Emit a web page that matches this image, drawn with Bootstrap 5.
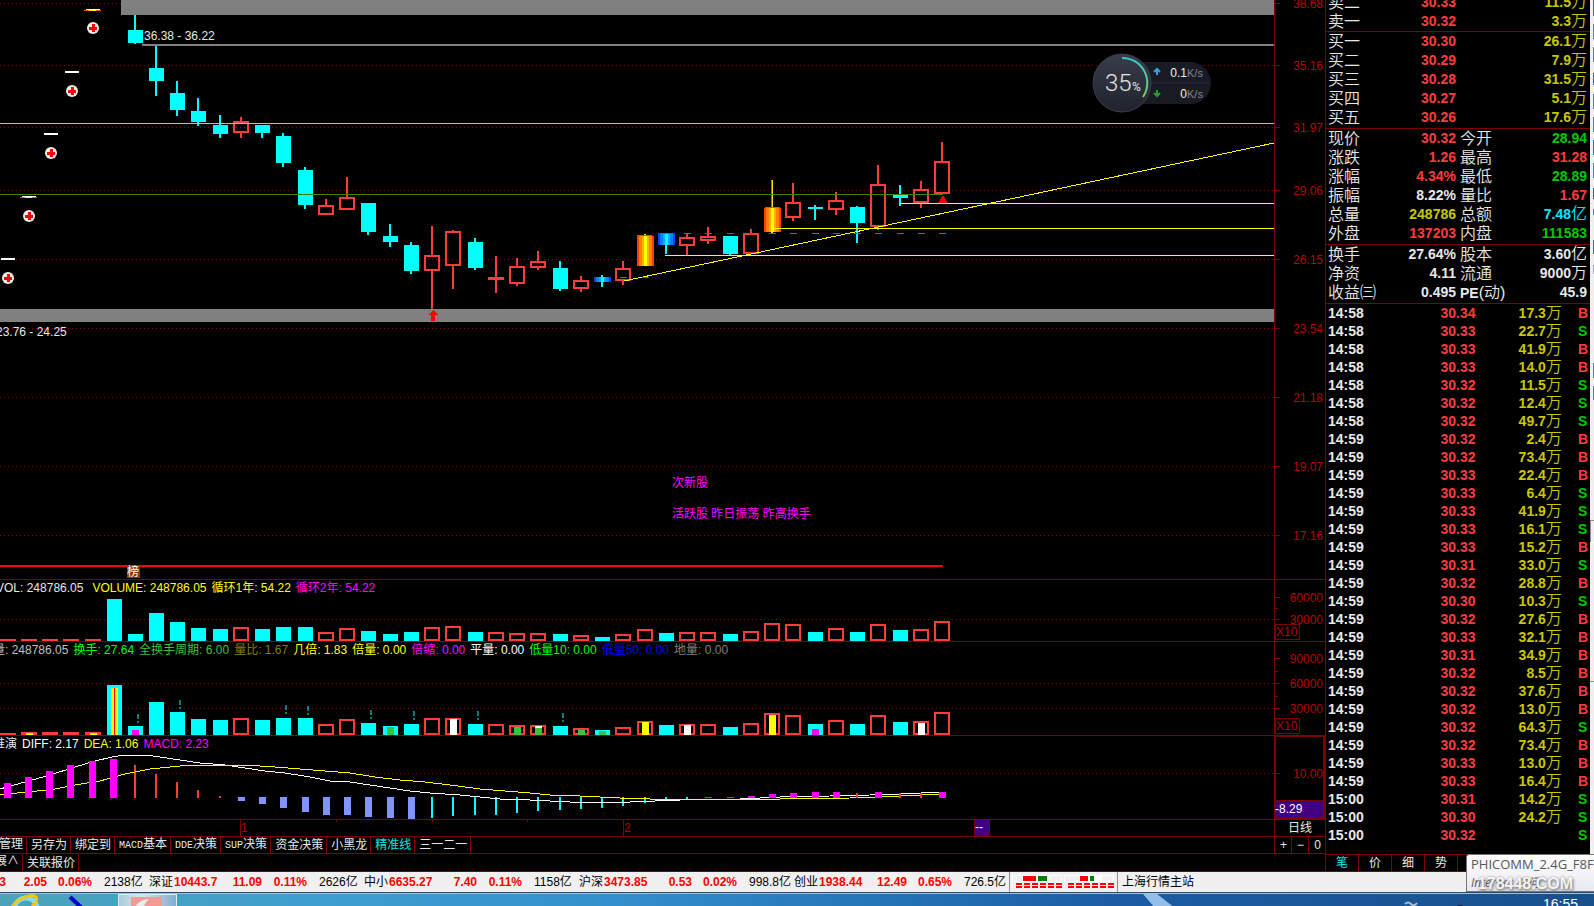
<!DOCTYPE html>
<html lang="zh-CN">
<head>
<meta charset="utf-8">
<meta name="viewport" content="width=device-width, initial-scale=1">
<title>行情 - 日线</title>
<link href="https://cdn.jsdelivr.net/npm/bootstrap@5.3.0/dist/css/bootstrap.min.css" rel="stylesheet">
<style>
  :root { --line:#800000; --axis:#b80000; --up:#ff3c3c; --down:#00ffff; --quote:#c8c800; --gain:#00c800; }
  body { background:#000; color:#e8e8e8; font:12px/16px "Liberation Sans","Noto Sans CJK SC",sans-serif; }
  svg { display:block; shape-rendering:crispEdges; }
  svg text { font-size:12px; }
  button { background:none; border:0; padding:0; color:inherit; line-height:16px; white-space:nowrap; }
  .fs-14 { font-size:14px; }

  /* chart column */
  .pane { border-bottom:1px solid var(--line); }
  .plot { min-width:0; overflow:hidden; }
  .plot svg { width:100%; }
  .scale { width:51px; border-left:1px solid var(--line); flex:none; }
  .legend-line { white-space:nowrap; height:18px; line-height:17px; gap:5px; }
  .shift-sm { margin-left:-4px; } .shift-lg { margin-left:-7px; }
  .h-price { height:579px; } .h-vol { height:43px; } .h-turn { height:75px; } .h-macd { height:65px; }
  .c-yel { color:#ff0; } .c-mag { color:#f0f; } .c-lime { color:#0f0; } .c-grn { color:#40c040; }
  .c-olive { color:#808000; } .c-blue { color:#00f; } .c-gray { color:#808080; } .c-lgray { color:#c0c0c0; }

  .strip { border-bottom:1px solid var(--line); height:17px; }
  .strip-last { height:18px; }
  .strip button { border-right:1px solid var(--line); padding:0 3px 0 4px; flex:none; line-height:14px; }
  .strip .latin { font-family:"Liberation Mono",monospace; font-size:10px; }
  .strip .first-tab { width:27px; overflow:hidden; display:flex; justify-content:flex-end; }
  .strip .first-tab.narrow { width:23px; }
  .strip .scale button { flex:1; }
  .scale button:last-child { border-right:0; }
  .is-on { color:#00e8e8; }

  /* quote column */
  .quotes { width:265px; border-left:1px solid var(--line); flex:none; font-size:14px; }
  .quotes table { width:100%; table-layout:fixed; border-collapse:collapse; }
  .quotes td, .quotes th { padding:0; height:19px; line-height:19px; white-space:nowrap; font-weight:bold; }
  .quotes th, .quotes .cjk { font-weight:350; font-size:16px; }
  .quotes .cjk, .quotes th b { line-height:0; }
  .quotes .block { border-bottom:1px solid var(--line); padding:0 3px 1px 2px; }
  .quotes .sell { height:32px; padding-bottom:0; overflow:hidden; }
  .quotes .ticks { width:auto; margin-left:2px; }
  .quotes .ticks td { height:18px; line-height:18px; }
  .t-time { width:60px; } .t-price { width:87px; } .t-vol { width:86px; } .t-side { width:28px; }
  .c-up { color:var(--up); } .c-down { color:var(--gain); } .c-vol { color:var(--quote); } .c-amt { color:#00e8ff; }
  .w-name { width:46px; } .w-price { width:82px; }
  .views { border-top:1px solid var(--line); border-bottom:1px solid var(--line); height:18px; font-size:12px; }
  .views button { width:33px; border-right:1px solid var(--line); }
  .edge { width:4px; flex:none; background:#f0f0f0; }

  /* status bar and taskbar */
  .status { height:22px; background:#f0f0f0; color:#000; border-bottom:1px solid #2a4a6c; line-height:20px; white-space:nowrap; }
  .index-item { display:grid; grid-template-columns:25px 47px 41px 45px 57px; flex:none; }
  .index-item b { color:#f00; }
  .index-item span:last-child { padding-left:12px; }
  .index-item.cut { margin-left:-66px; }
  .cell-sep { border-left:1px solid #909090; }
  .taskbar { height:13px; overflow:hidden; border-top:1px solid #9cc4e4;
    background:linear-gradient(90deg,#4aa4b8 0,#3f9ed0 20%,#3490cc 38%,#2474b8 55%,#1c5ca4 70%,#18508c 100%); }
  .task-app { width:59px; height:20px; border:1px solid #dcecf4; background:linear-gradient(90deg,#a8ccdc,#d8e4ea 40%,#7cb0d0); margin-left:32px; }
  .clock { padding:2px 16px 0 0; }

  /* floating items */
  .net-meter { left:1092px; top:53px; width:122px; height:60px; }
  .net-meter svg, .taskbar svg { shape-rendering:auto; }
  .wifi-tip { right:0; bottom:14px; width:128px; height:38px; overflow:hidden; color:#575757; white-space:nowrap;
    background:linear-gradient(#fff,#e8e8f2); border:1px solid #767676; border-right:0; border-radius:3px 0 0 0; padding-left:4px;
    font:13px/18px "Open Sans","Noto Sans CJK SC",sans-serif; }
  .wifi-tip em { font-size:12px; line-height:16px; }
  .stamp { right:21px; bottom:12px; font:bold 16px/20px "Liberation Sans",sans-serif; color:#f4f4f4;
    text-shadow:0 0 2px #888,1px 2px 3px #777; }
</style>
</head>
<body class="overflow-hidden">
<div class="d-flex flex-column vh-100 position-relative overflow-hidden">
  <main class="d-flex">
    <section class="flex-grow-1 d-flex flex-column plot">
      <div class="pane d-flex">
        <div class="plot flex-grow-1"><svg id="price" class="h-price"></svg></div>
        <div class="scale"><svg id="priceScale" class="h-price" width="50"></svg></div>
      </div>

      <div class="pane d-flex">
        <div class="plot flex-grow-1">
          <div class="legend-line shift-sm d-flex"><span>VOL: 248786.05</span><span class="c-yel ps-1">VOLUME: 248786.05</span><span class="c-yel">循环1年: 54.22</span><span class="c-mag">循环2年: 54.22</span></div>
          <svg id="vol" class="h-vol"></svg>
        </div>
        <div class="scale"><svg id="volScale" height="61" width="50"></svg></div>
      </div>

      <div class="pane d-flex">
        <div class="plot flex-grow-1">
          <div class="legend-line shift-lg d-flex"><span class="c-lgray">量: 248786.05</span><span class="c-lime">换手: 27.64</span><span class="c-grn">全换手周期: 6.00</span><span class="c-olive">量比: 1.67</span><span class="c-yel">几倍: 1.83</span><span class="c-yel">倍量: 0.00</span><span class="c-mag">倍缩: 0.00</span><span class="text-white">平量: 0.00</span><span class="c-lime">低量10: 0.00</span><span class="c-blue">低量50: 0.00</span><span class="c-gray">地量: 0.00</span></div>
          <svg id="turn" class="h-turn"></svg>
        </div>
        <div class="scale"><svg id="turnScale" height="93" width="50"></svg></div>
      </div>

      <div class="pane d-flex">
        <div class="plot flex-grow-1">
          <div class="legend-line shift-lg d-flex"><span>推演</span><span class="text-white">DIFF: 2.17</span><span class="c-yel">DEA: 1.06</span><span class="c-mag">MACD: 2.23</span></div>
          <svg id="macd" class="h-macd"></svg>
        </div>
        <div class="scale"><svg id="macdScale" height="83" width="50"></svg></div>
      </div>

      <div class="strip d-flex">
        <div class="plot flex-grow-1"><svg id="months" height="16"></svg></div>
        <div class="scale text-center">日线</div>
      </div>
      <div class="strip d-flex">
        <nav class="plot flex-grow-1 d-flex">
          <button class="first-tab">管理</button><button>另存为</button><button>绑定到</button><button><span class="latin">MACD</span>基本</button><button><span class="latin">DDE</span>决策</button><button><span class="latin">SUP</span>决策</button><button>资金决策</button><button>小黑龙</button><button class="is-on">精准线</button><button>三一二一</button>
        </nav>
        <div class="scale d-flex"><button>+</button><button>−</button><button>0</button></div>
      </div>
      <div class="strip strip-last d-flex"><button class="first-tab narrow">展∧</button><button>关联报价</button></div>
    </section>

    <aside class="quotes d-flex flex-column">
      <div class="block sell d-flex align-items-end">
        <table>
          <colgroup><col class="w-name"><col class="w-price"><col></colgroup>
          <tr><th>卖二</th><td class="text-end c-up">30.33</td><td class="text-end c-vol">11.5<span class="cjk">万</span></td></tr>
          <tr><th>卖一</th><td class="text-end c-up">30.32</td><td class="text-end c-vol">3.3<span class="cjk">万</span></td></tr>
        </table>
      </div>
      <div class="block">
        <table>
          <colgroup><col class="w-name"><col class="w-price"><col></colgroup>
          <tr><th>买一</th><td class="text-end c-up">30.30</td><td class="text-end c-vol">26.1<span class="cjk">万</span></td></tr>
          <tr><th>买二</th><td class="text-end c-up">30.29</td><td class="text-end c-vol">7.9<span class="cjk">万</span></td></tr>
          <tr><th>买三</th><td class="text-end c-up">30.28</td><td class="text-end c-vol">31.5<span class="cjk">万</span></td></tr>
          <tr><th>买四</th><td class="text-end c-up">30.27</td><td class="text-end c-vol">5.1<span class="cjk">万</span></td></tr>
          <tr><th>买五</th><td class="text-end c-up">30.26</td><td class="text-end c-vol">17.6<span class="cjk">万</span></td></tr>
        </table>
      </div>
      <div class="block">
        <table>
          <colgroup><col class="w-name"><col class="w-price"><col><col></colgroup>
          <tr><th>现价</th><td class="text-end c-up">30.32</td><th class="ps-1">今开</th><td class="text-end c-down">28.94</td></tr>
          <tr><th>涨跌</th><td class="text-end c-up">1.26</td><th class="ps-1">最高</th><td class="text-end c-up">31.28</td></tr>
          <tr><th>涨幅</th><td class="text-end c-up">4.34%</td><th class="ps-1">最低</th><td class="text-end c-down">28.89</td></tr>
          <tr><th>振幅</th><td class="text-end">8.22%</td><th class="ps-1">量比</th><td class="text-end c-up">1.67</td></tr>
          <tr><th>总量</th><td class="text-end c-vol">248786</td><th class="ps-1">总额</th><td class="text-end c-amt">7.48<span class="cjk">亿</span></td></tr>
          <tr><th>外盘</th><td class="text-end c-up">137203</td><th class="ps-1">内盘</th><td class="text-end c-down">111583</td></tr>
        </table>
      </div>
      <div class="block">
        <table>
          <colgroup><col class="w-name"><col class="w-price"><col><col></colgroup>
          <tr><th>换手</th><td class="text-end">27.64%</td><th class="ps-1">股本</th><td class="text-end">3.60<span class="cjk">亿</span></td></tr>
          <tr><th>净资</th><td class="text-end">4.11</td><th class="ps-1">流通</th><td class="text-end">9000<span class="cjk">万</span></td></tr>
          <tr><th>收益㈢</th><td class="text-end">0.495</td><th class="ps-1"><b class="fs-14">PE</b>(动)</th><td class="text-end">45.9</td></tr>
        </table>
      </div>
      <table class="ticks"><colgroup><col class="t-time"><col class="t-price"><col class="t-vol"><col class="t-side"></colgroup><tbody id="ticks"></tbody></table>
      <div class="views d-flex mt-auto"><button class="is-on">笔</button><button>价</button><button>细</button><button>势</button></div>
    </aside>
    <div class="edge"><svg id="edge" width="4" height="871"></svg></div>
  </main>

  <footer class="status d-flex">
    <div class="index-item cut"><span></span><b class="text-end">3</b><b class="text-end">2.05</b><b class="text-end">0.06%</b><span>2138亿</span></div>
    <div class="index-item"><span>深证</span><b>10443.7</b><b class="text-end">11.09</b><b class="text-end">0.11%</b><span>2626亿</span></div>
    <div class="index-item"><span>中小</span><b>6635.27</b><b class="text-end">7.40</b><b class="text-end">0.11%</b><span>1158亿</span></div>
    <div class="index-item"><span>沪深</span><b>3473.85</b><b class="text-end">0.53</b><b class="text-end">0.02%</b><span>998.8亿</span></div>
    <div class="index-item"><span>创业</span><b>1938.44</b><b class="text-end">12.49</b><b class="text-end">0.65%</b><span>726.5亿</span></div>
    <div class="cell-sep"><svg id="lights" width="107" height="20"></svg></div>
    <div class="cell-sep ps-1">上海行情主站</div>
  </footer>

  <div class="taskbar d-flex flex-grow-1">
    <svg width="86" height="30">
      <ellipse cx="26" cy="14" rx="11" ry="10" fill="none" stroke="#7fdcf4" stroke-width="5"/>
      <path d="M12 13C18 4 32 -1 36 3c2 3-2 8-6 12" fill="none" stroke="#f5c518" stroke-width="3"/>
      <path d="M70 3l12 11" stroke="#0000c8" stroke-width="4"/>
    </svg>
    <div class="task-app"><svg width="57" height="20"><rect x="12" y="2" width="31" height="18" fill="#f49a94"/><path d="M14 20C15 9 21 5 30 4 24 9 24 14 27 20z" fill="#e8eef0"/></svg></div>
    <svg class="flex-grow-1" height="14">
      <path d="M966 0h14l18 14h-20z" fill="#a8d0f4" opacity=".85"/>
      <path d="M1228 10q3-3 6 0t6-1" fill="none" stroke="#b0bcc8" stroke-width="2"/>
      <circle cx="1283" cy="16" r="5" fill="#06101c"/>
    </svg>
    <time class="text-white fs-14 clock">16:55</time>
  </div>

  <div class="net-meter position-absolute">
    <svg width="122" height="60">
      <defs><linearGradient id="dial" x1="0" y1="0" x2="0" y2="1"><stop offset="0" stop-color="#383d4c"/><stop offset="1" stop-color="#20232c"/></linearGradient>
      <linearGradient id="arc" x1="0" y1="0" x2="0" y2="1"><stop offset="0" stop-color="#30c8c8"/><stop offset="1" stop-color="#80d060"/></linearGradient></defs>
      <rect x="22" y="9" width="97" height="42" rx="21" fill="#181b24"/>
      <path d="M58 30h60" stroke="#262a36"/>
      <circle cx="30" cy="30" r="29" fill="url(#dial)" stroke="#3c404c"/>
      <path d="M30 5A25 25 0 0 1 51 44" fill="none" stroke="url(#arc)" stroke-width="2"/>
      <text x="13" y="38" style="font:300 24px Roboto,sans-serif" fill="#e4e4e4">35</text>
      <text x="40" y="38" style="font:12px Roboto,sans-serif" fill="#e4e4e4">%</text>
      <path d="M65 22v-6M62 19l3-3 3 3" fill="none" stroke="#38a0e0" stroke-width="2"/>
      <path d="M65 37v6M62 40l3 3 3-3" fill="none" stroke="#20a030" stroke-width="2"/>
      <text x="95" y="24" text-anchor="end" fill="#f0f0f0">0.1</text><text x="95" y="24" style="font-size:11px" fill="#808490">K/s</text>
      <text x="95" y="45" text-anchor="end" fill="#f0f0f0">0</text><text x="95" y="45" style="font-size:11px" fill="#808490">K/s</text>
    </svg>
  </div>
  <div class="wifi-tip position-absolute">PHICOMM_2.4G_F8F8<br><em>Internet 访问</em></div>
  <div class="stamp position-absolute">178448.COM</div>
</div>

<script src="https://cdn.jsdelivr.net/npm/bootstrap@5.3.0/dist/js/bootstrap.bundle.min.js"></script>
<script>
const UP = '#ff3c3c', DOWN = '#00ffff', LINE = '#800000', AXIS = '#b80000';
const cx = i => Math.floor(135 + 21.25 * i);
const rect = (x, y, w, h, f) => `<rect x="${x}" y="${y}" width="${w}" height="${h}" fill="${f}"/>`;
const frame = (x, y, w, h) => `<rect x="${x + 1}" y="${y + 1}" width="${w - 2}" height="${Math.max(h - 2, 1)}" fill="none" stroke="${UP}" stroke-width="2"/>`;
const hline = (x, y, f, h = 1) => rect(x, y, '100%', h, f);
const grid = y => `<line x1="0" x2="100%" y1="${y + .5}" y2="${y + .5}" stroke="#900000" stroke-dasharray="1 3"/>`;
const label = (x, y, s, f, a = 'start') => `<text x="${x}" y="${y}" fill="${f}" text-anchor="${a}">${s}</text>`;
// every pane shares one vertical coordinate system; top is where the pane starts in it
const put = (id, top, s) => document.getElementById(id).innerHTML = `<g transform="translate(0 ${-top})">${s}</g>`;
const stripes = (x, y, h, cols) => { const n = cols.length; let s = ''; cols.forEach((c, k) => { const a = Math.round(k * 17 / n), b = Math.round((k + 1) * 17 / n); s += rect(x - 8 + a, y, b - a, h, c); }); return s; };
const FIRE = ['#ff3c00','#ff8000','#ffb000','#ffff00','#ffb000','#ff8000','#ff3c00'];
const ICE = ['#0040ff','#0080ff','#00b0ff','#00ffff','#00b0ff','#0080ff','#0040ff'];

// price pane: kind, high, body top, body bottom, low
const candles = [
 ['d',15,30,43,44],['d',46,68,81,96],['d',81,93,110,116],['d',98,111,122,126],['d',115,125,134,138],['u',117,121,133,138],
 ['d',125,125,133,138],['d',133,136,163,167],['d',167,170,205,209],['u',199,205,215,215],['u',177,197,210,210],['d',203,203,232,235],
 ['d',224,236,242,247],['d',242,245,271,274],['u',226,255,271,309],['u',230,231,266,289],['d',238,242,268,270],['u',256,277,280,293],
 ['u',258,266,284,286],['u',251,261,268,270],['d',261,268,289,291],['u',276,280,289,292],['ice',275,277,282,287],['u',261,268,281,285],
 ['fire',234,236,266,266],['ice',233,233,245,254],['u',234,237,246,255],['u',227,236,241,244],['d',236,236,254,255],['u',229,233,254,254],
 ['fire',180,208,232,233],['u',183,202,218,221],['d',205,207,209,220],['u',192,200,210,215],['d',206,207,223,243],['u',165,184,227,230],
 ['d',185,194,198,206],['u',181,189,203,208],['u',142,161,194,194]];
let s = [3,65,127,190,259,328,397,466,535].map(grid).join('');
s += hline(121, 0, '#808080', 15) + hline(142, 44, '#808080', 2) + hline(0, 309, '#808080', 13);
candles.forEach(([k, hi, a, b, lo], i) => {
  const x = cx(i);
  if (k === 'u') s += rect(x - 1, hi, 2, a - hi, UP) + rect(x - 1, b, 2, lo - b, UP) + frame(x - 8, a, 16, b - a);
  else if (k === 'd') s += rect(x - 1, hi, 2, lo - hi, DOWN) + rect(x - 7, a, 15, b - a, DOWN);
  else s += rect(x - 1, hi, 2, lo - hi, k === 'ice' ? DOWN : '#ffe000') + stripes(x, a, b - a, k === 'ice' ? ICE : FIRE);
});
s += rect(cx(30) - 1, 180, 1, 27, UP) + rect(637, 235, 15, 1, UP) + rect(765, 207, 15, 1, UP);
s += hline(0, 123, '#80ff00') + rect(0, 194, 943, 1, '#408000');
s += hline(899, 203, '#ff0') + hline(773, 228, '#ff0') + hline(665, 255, '#ff0');
s += '<path d="M624 281L2574 -133" stroke="#ff0" fill="none"/>';
for (let i = 23; i < 39; i++) s += rect(cx(i) - 3, i < 25 ? 277 : 233, 7, 1, '#0080ff');
s += `<path d="M433 310l5 5h-3v6h-4v-6h-3z" fill="red"/><path d="M943 195l5 8h-10z" fill="red"/>`;
[[93,28,9,1],[72,91,71,0],[51,153,133,0],[29,216,196,1],[8,278,258,0]].forEach(([x, y, t, hot]) => {
  s += rect(x - 7, t, 14, hot ? 1 : 2, '#fff');
  if (hot) s += rect(x - 9, t + 1, 17, 1, '#ff5000') + rect(x - 4, t + 1, 7, 1, '#ff0');
  s += `<circle cx="${x}" cy="${y}" r="6" fill="#ececec" style="shape-rendering:auto"/>` + rect(x - 4, y - 1, 8, 3, 'red') + rect(x - 1, y - 4, 3, 8, 'red');
});
s += label(144, 40, '36.38 - 36.22', '#e8e8e8') + label(-4, 336, '23.76 - 24.25', '#e8e8e8');
s += label(672, 487, '次新股', '#f0f') + label(672, 518, '活跃股 昨日振荡 昨高换手', '#f0f');
s += rect(0, 565, 943, 2, 'red') + rect(127, 565, 13, 13, '#804000') + label(127, 576, '榜', '#fff');
put('price', 0, s);
const ticksAt = (ys, names) => ys.map((y, i) => rect(0, y, 5, 1, LINE) + label(48, y + 5, names[i], AXIS, 'end')).join('');
put('priceScale', 0, ticksAt([3,65,127,190,259,328,397,466,535], ['38.68','35.16','31.97','29.06','26.15','23.54','21.18','19.07','17.16']));

// volume panes start six bars before the first candle
const kindAt = i => i === -1 ? 'd' : i < 0 ? 'u' : candles[i][0] === 'd' || candles[i][0] === 'ice' || false ? 'd' : 'u';
const xs = i => i < 0 ? Math.round(135 + 21.2 * i) : cx(i);
const column = (i, top, base) => kindAt(i) === 'd' ? rect(xs(i) - 7, top, 15, base - top, DOWN) : frame(xs(i) - 8, top, 16, base - top);
const vol = [639,639,639,639,639,599,634,613,622,628,629,627,629,627,627,632,628,631,634,632,627,626,632,632,633,633,634,635,637,634,629,633,632,632,634,631,623,624,632,628,632,624,630,629,621];
put('vol', 598, grid(619) + vol.map((t, k) => column(k - 6, t, 641)).join(''));
const box = y => `<rect x=".5" y="${y + .5}" width="24" height="15" fill="none" stroke="${LINE}"/>` + label(1, y + 12, 'X10', AXIS);
put('volScale', 580, ticksAt([597,619], ['60000','30000']) + rect(0, 608, 3, 1, LINE) + rect(0, 624, 25, 16, '#000') + box(624));

const turn = [733,732,732,732,732,685,726,702,712,719,720,718,720,718,718,724,719,723,726,724,718,718,724,724,725,725,726,728,730,727,721,725,724,724,727,723,713,715,724,720,724,715,722,721,712];
let t = grid(683) + grid(708) + turn.map((y, k) => column(k - 6, y, 735)).join('');
[[-5,733,'#ff0'],[-2,733,'#ff0'],[-1,688,'#ff0'],[0,730,'#f0f'],[12,727,'#40c040'],[15,719,'#fff'],[18,727,'#40c040'],[19,726,'#fff'],[19,728,'#40c040'],[21,730,'#40c040'],[22,731,'#40c040'],[24,722,'#ff0'],[26,725,'#fff'],[30,715,'#ff0'],[32,729,'#f0f'],[37,723,'#fff']]
  .forEach(([i, y, c]) => t += rect(xs(i) - 3, y, 7, 735 - y, c));
t += rect(xs(-1), 688, 1, 47, 'red');
[[0,714],[2,700],[7,705],[8,706],[11,710],[13,711],[16,711],[20,713]].forEach(([i, y]) => t += rect(cx(i) + 2, y, 2, 5, '#008080') + rect(cx(i) + 2, y + 7, 2, 2, '#008080'));
put('turn', 660, t);
put('turnScale', 642, ticksAt([658,683,708], ['90000','60000','30000']) + rect(0, 671, 3, 1, LINE) + rect(0, 696, 3, 1, LINE) + rect(0, 718, 25, 16, '#000') + box(718));

// MACD pane
let m = grid(773);
const poly = (c, p) => `<polyline points="${p}" fill="none" stroke="${c}"/>`;
[765,774,782,790,796].forEach((y, i) => m += rect(cx(i) - 1, y, 2, 798 - y, UP));
[801,804,808,812,815,815,817,818,819].forEach((y, k) => m += rect(cx(k + 5) - 3, 797, 7, y - 797, '#8094ff'));
[818,816,815,815,813,811,810,809,808,806,803,801,799].forEach((y, k) => m += rect(cx(k + 14) - 1, 797, 2, y - 797, DOWN));
m += poly('#fff', '0,789 25,782 50,775 75,767 95,761 112,757 125,755 145,755 160,757 180,760 200,763 225,765 245,768 265,771 285,773 310,777 330,781 350,782 370,785 390,788 410,791 430,793 460,795 480,797 500,799 530,800 570,802 630,802 680,800 740,799 780,797 830,796 870,795 900,794 942,792');
m += poly('#ff0', '0,795 25,792 50,790 75,785 100,781 125,774 150,769 170,767 190,765 245,765 275,767 300,769 325,771 350,773 375,777 400,780 425,782 450,785 480,789 505,791 530,793 550,795 580,796 620,798 650,799 780,799 850,798 900,796 942,794');
[783,777,771,765,761,759].forEach((y, k) => m += rect(xs(k - 6) - 4, y, 7, 798 - y, '#f0f'));
[[27,797],[28,797],[29,796],[30,794],[31,793],[32,792],[33,792],[35,792],[38,792]].forEach(([i, y]) => m += rect(cx(i) - 3, y, 7, i < 29 ? 1 : 798 - y, '#f0f'));
[34,36,37].forEach(i => m += rect(cx(i) - 1, 793, 2, 5, UP));
put('macd', 754, m);
put('macdScale', 736, rect(0, 801, 50, 16, '#400080') + `<rect x="0" y="736" width="49" height="82" fill="none" stroke="${LINE}" stroke-width="2"/>` + rect(0, 800, 50, 1, LINE) + ticksAt([773], ['10.00']) + label(0, 813, '-8.29', '#fff'));

put('months', 0, rect(240, 0, 1, 16, LINE) + rect(336, 0, 1, 2, LINE) + rect(432, 0, 1, 2, LINE) + rect(527, 0, 1, 2, LINE) + rect(623, 0, 1, 16, LINE)
  + label(241, 12, '1', AXIS) + label(624, 12, '2', AXIS) + rect(974, 0, 16, 16, LINE) + rect(975, 0, 14, 16, '#400080') + label(975, 11, '--', '#fff'));

// tick list
const trades = `14:58 30.34 17.3 B|14:58 30.33 22.7 S|14:58 30.33 41.9 B|14:58 30.33 14.0 B|14:58 30.32 11.5 S|14:58 30.32 12.4 S|14:58 30.32 49.7 S|14:59 30.32 2.4 B|14:59 30.32 73.4 B|14:59 30.33 22.4 B|14:59 30.33 6.4 S|14:59 30.33 41.9 S|14:59 30.33 16.1 S|14:59 30.33 15.2 B|14:59 30.31 33.0 S|14:59 30.32 28.8 B|14:59 30.30 10.3 S|14:59 30.32 27.6 B|14:59 30.33 32.1 B|14:59 30.31 34.9 B|14:59 30.32 8.5 B|14:59 30.32 37.6 B|14:59 30.32 13.0 B|14:59 30.32 64.3 S|14:59 30.32 73.4 B|14:59 30.33 13.0 B|14:59 30.33 16.4 B|15:00 30.31 14.2 S|15:00 30.30 24.2 S|15:00 30.32 - S`;
document.getElementById('ticks').innerHTML = trades.split('|').map(r => {
  const [time, price, v, side] = r.split(' ');
  return `<tr><td>${time}</td><td class="text-end c-up">${price}</td><td class="text-end c-vol">${v === '-' ? '' : v + '<span class="cjk">万</span>'}</td><td class="ps-3 ${side === 'B' ? 'c-up' : 'c-down'}">${side}</td></tr>`;
}).join('');

// market lights
let l = '';
[[2,[[0,10,'#f0f0f0'],[10,14,'#f00'],[25,10,'#008000'],[37,12,'#f0f0f0']]],[54,[[0,15,'#f0f0f0'],[15,9,'#f00'],[25,5,'#008000'],[37,12,'#f0f0f0']]]].forEach(([x, cells]) => {
  l += rect(x, 3, 50, 7, '#fff');
  cells.forEach(([a, w, c]) => l += rect(x + a + 1, 4, w - 1, 5, c));
  for (let k = 0; k < 6; k++) l += rect(x + 4 + k * 8, 11, 6, 2, '#f00') + rect(x + 4 + k * 8, 14, 6, 2, '#f00');
});
put('lights', 0, l);

// sliver of the neighbouring window
let e = '';
[[0,16],[24,15],[47,15],[73,12],[94,15],[117,15],[140,15],[163,15],[209,6],[240,14],[363,15],[386,14]].forEach(([y, h], k) => e += rect(3, y, 1, h, k % 3 ? '#4080e0' : '#0080d0'));
e += rect(3, 188, 1, 11, '#108060') + rect(3, 265, 1, 9, '#b0a0d8') + rect(0, 520, 4, 1, '#909090') + rect(0, 520, 1, 22, '#909090') + rect(1, 542, 3, 1, '#fff') + rect(0, 681, 4, 1, '#909090');
put('edge', 0, e);
</script>
</body>
</html>
